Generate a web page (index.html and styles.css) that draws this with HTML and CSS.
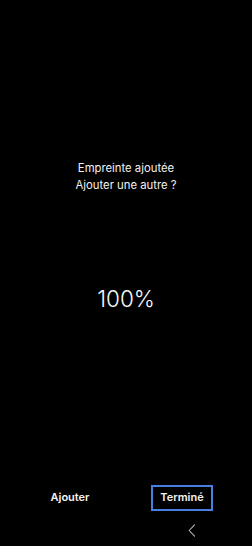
FILE: index.html
```html
<!DOCTYPE html>
<html lang="fr">
<head>
<meta charset="utf-8">
<title>Empreinte ajoutée</title>
<link rel="stylesheet" href="styles.css">
</head>
<body>
<div class="screen">
  <main class="content">
    <div class="message">
      <p>Empreinte ajoutée</p>
      <p>Ajouter une autre ?</p>
    </div>
    <div class="percent">100%</div>
  </main>
  <div class="actions">
    <div class="action"><button class="btn">Ajouter</button></div>
    <div class="action"><button class="btn focused">Terminé</button></div>
  </div>
  <nav class="navbar">
    <svg class="back" width="8" height="13" viewBox="0 0 8 13" aria-label="Retour">
      <polyline points="6.5,0.8 1.2,6.5 6.5,12.2" fill="none" stroke="#b4b4b4" stroke-width="1.1" stroke-linecap="round" stroke-linejoin="round"/>
    </svg>
  </nav>
</div>
</body>
</html>
```
FILE: styles.css
```css
html, body {
  margin: 0;
  padding: 0;
  background: #000;
}
body {
  font-family: Inter, Roboto, "Noto Sans", sans-serif;
  color: #f2f2f2;
}
.screen {
  display: flex;
  flex-direction: column;
  height: 546px;
  width: 252px;
}
.content {
  flex: 1;
  display: flex;
  flex-direction: column;
  align-items: center;
  padding-top: 160px;
}
.message {
  text-align: center;
  font-size: 11.3px;
  line-height: 16.5px;
}
.message p {
  margin: 0;
}
.percent {
  margin-top: 93px;
  font-size: 22.5px;
  line-height: 26px;
  font-weight: 300;
  color: #fafafa;
}
.actions {
  display: flex;
  padding: 0 14px 3px;
}
.action {
  flex: 1;
  display: flex;
  justify-content: center;
}
.btn {
  font-family: Inter, Roboto, "Noto Sans", sans-serif;
  font-size: 11px;
  font-weight: 600;
  line-height: 14px;
  color: #f4f4f4;
  background: transparent;
  border: 2px solid transparent;
  padding: 3px 7px 5px;
  margin: 0;
}
.btn.focused {
  border-color: #4a7fe2;
}
.navbar {
  height: 32px;
  display: flex;
  align-items: center;
  justify-content: flex-end;
  padding-right: 56px;
}
.back {
  display: block;
}
```
